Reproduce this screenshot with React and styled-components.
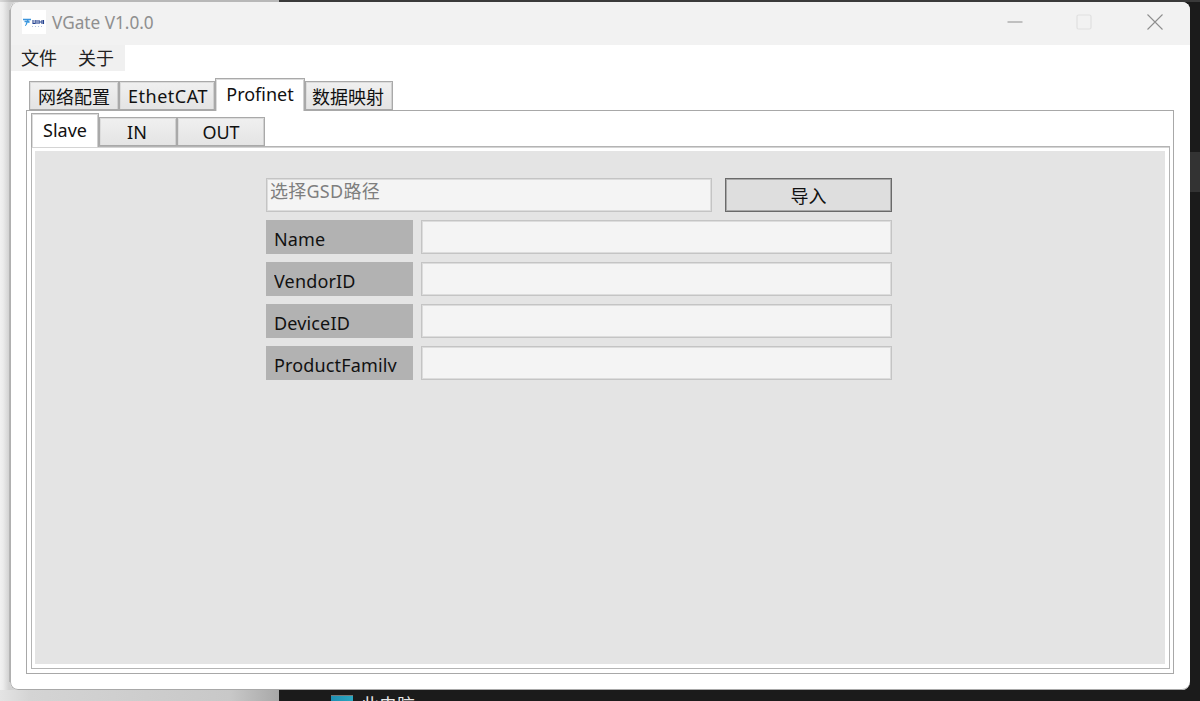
import React from "react";
import styled, { createGlobalStyle } from "styled-components";

const Global = createGlobalStyle`
  html, body { margin: 0; padding: 0; width: 1200px; height: 701px; overflow: hidden; }
  body { font-family: "Noto Sans", "Noto Sans CJK SC", sans-serif; }
  #root { width: 1200px; height: 701px; }
`;

const Desktop = styled.div`
  position: relative;
  width: 1200px;
  height: 701px;
  overflow: hidden;
  box-sizing: border-box;
  padding: 2px 10px 11px;
  background: linear-gradient(90deg, #f1f1f1 0, #ececec 3px, #d2d2d2 9px, #d2d2d2 279px, #1b1b1b 279px, #1b1b1b 100%);
`;
const TopStrip = styled.div`
  position: absolute;
  left: 0;
  right: 0;
  top: 0;
  height: 2px;
  background: linear-gradient(90deg, #d8d8d8 0, #b8b8b8 12px, #b8b8b8 279px, #3a3a3a 279px, #3a3a3a 100%);
`;
const BottomShade = styled.div`
  position: absolute;
  left: 0;
  width: 279px;
  bottom: 0;
  height: 11px;
  background: linear-gradient(90deg, #e4e4e4 0, #d4d4d4 30px, #c8c8c8 230px, #a8a8a8 279px);
`;
const SideBand = styled.div`
  position: absolute;
  right: 0;
  top: 152px;
  width: 10px;
  height: 40px;
  background: #333;
`;
const ThisPc = styled.div`
  position: absolute;
  left: 331px;
  top: 695px;
  display: flex;
  gap: 8px;
  align-items: flex-start;
  color: #e8e8e8;
  font-size: 18px;
  line-height: 18px;
  font-family: "Noto Sans CJK SC", sans-serif;
`;
const PcIcon = styled.div`
  width: 22px;
  height: 14px;
  background: linear-gradient(90deg, #1f8fb3, #2aa6bf);
  border-top: 1px solid #777;
`;
const Window = styled.div`
  position: relative;
  width: 1180px;
  height: 688px;
  box-sizing: border-box;
  background: #fff;
  border-radius: 8px;
  overflow: hidden;
  display: flex;
  flex-direction: column;
  &::after {
    content: "";
    position: absolute;
    inset: 0;
    border-radius: 8px;
    pointer-events: none;
    box-shadow: inset 1px 0 0 #b0b0b0, inset 0 -1px 0 #a8a8a8;
  }
`;
const WindowEdge = styled.div`
  position: absolute;
  left: 9px;
  top: 10px;
  width: 1px;
  height: 672px;
  background: #b4b4b4;
`;
const TitleBar = styled.div`
  height: 43px;
  flex: none;
  box-sizing: border-box;
  background: #f2f2f2;
  display: flex;
  align-items: center;
  padding: 0 0 3px 12px;
`;
const Logo = styled.svg`
  width: 24px;
  height: 24px;
  flex: none;
  display: block;
`;
const Title = styled.span`
  margin-left: 6px;
  font-size: 17.2px;
  color: #8f8f8f;
`;
const Caption = styled.div`
  margin-left: auto;
  display: flex;
  align-items: center;
`;
const CaptionBtn = styled.div`
  width: 70px;
  box-sizing: border-box;
  padding-right: ${(p) => p.$pr || 0}px;
  height: 30px;
  display: flex;
  align-items: center;
  justify-content: center;
`;
const MenuBar = styled.div`
  flex: none;
  width: 114px;
  height: 26px;
  margin-left: 1px;
  background: #f0f0f0;
  display: flex;
  align-items: center;
  padding: 0 0 2px 10px;
  gap: 21px;
  box-sizing: border-box;
`;
const MenuItem = styled.span`
  font-family: "Noto Sans CJK SC", sans-serif;
  font-size: 18px;
  line-height: 24px;
  color: #222;
`;
const Tabs = styled.div`
  display: flex;
  align-items: flex-end;
  height: ${(p) => p.$h}px;
  margin-left: ${(p) => p.$ml}px;
  flex: none;
  position: relative;
  z-index: 1;
`;
const Tab = styled.div`
  width: ${(p) => p.$w}px;
  height: ${(p) => (p.$active ? p.$ah : p.$ih)}px;
  box-sizing: border-box;
  flex: none;
  display: flex;
  align-items: center;
  justify-content: center;
  font-size: 18px;
  letter-spacing: ${(p) => p.$ls || 0}px;
  color: #111;
  border: 1px solid #a9a9a9;
  border-bottom: ${(p) => (p.$active ? "none" : "1px solid #a9a9a9")};
  box-shadow: inset 1px 1px 0 #dcdcdc, inset -1px 0 0 #d0d0d0;
  background: ${(p) => (p.$active ? "#fff" : "linear-gradient(#f0f0f0, #e4e4e4)")};
  margin-bottom: ${(p) => (p.$active ? -1 : 0)}px;
  padding-bottom: ${(p) => (p.$active ? p.$apb : 0)}px;
  padding-left: ${(p) => p.$pl || 0}px;
  padding-right: ${(p) => p.$pr || 0}px;
`;
const OuterPane = styled.div`
  flex: none;
  margin-left: 16px;
  width: 1148px;
  height: 564px;
  box-sizing: border-box;
  border: 1px solid #a8a8a8;
  background: #fff;
  padding: 4px 3px 4px 4px;
  display: flex;
  flex-direction: column;
`;
const InnerPane = styled.div`
  flex: none;
  width: 1139px;
  height: 523px;
  box-sizing: border-box;
  border: 1px solid #b4b4b4;
  box-shadow: inset 0 1px 0 #d4d4d4;
  background: #fff;
  padding: 4px 3px;
`;
const Canvas = styled.div`
  width: 1130px;
  height: 513px;
  background: #e4e4e4;
  box-sizing: border-box;
  padding: 27px 0 0 231px;
`;
const Form = styled.div`
  width: 626px;
  display: flex;
  flex-direction: column;
  gap: 8px;
`;
const Row = styled.div`
  display: flex;
  height: 34px;
  gap: ${(p) => p.$gap}px;
`;
const PathField = styled.div`
  width: 446px;
  height: 34px;
  box-sizing: border-box;
  border: 1px solid #c4c4c4;
  box-shadow: inset 0 0 0 1px #dcdcdc;
  background: #f4f4f4;
  color: #7e7e7e;
  font-size: 18px;
  letter-spacing: 0.25px;
  line-height: 22px;
  padding: 1px 0 0 3px;
`;
const ImportBtn = styled.div`
  width: 167px;
  height: 34px;
  box-sizing: border-box;
  border: 1px solid #6a6a6a;
  box-shadow: inset 0 0 0 1px #a8a8a8;
  background: #dedede;
  display: flex;
  align-items: center;
  justify-content: center;
  font-size: 18px;
  color: #111;
  font-family: "Noto Sans CJK SC", sans-serif;
`;
const Label = styled.div`
  width: 147px;
  height: 34px;
  flex: none;
  box-sizing: border-box;
  background: #b2b2b2;
  padding: 7px 0 0 8px;
`;
const LabelText = styled.div`
  height: 19px;
  overflow: hidden;
  font-size: 18px;
  letter-spacing: 0.15px;
  line-height: 25px;
  color: #111;
`;
const Value = styled.div`
  width: 471px;
  height: 34px;
  box-sizing: border-box;
  border: 1px solid #c4c4c4;
  box-shadow: inset 0 0 0 1px #dcdcdc;
  background: #f4f4f4;
`;

const outer = [
  { t: "网络配置", w: 90 },
  { t: "EthetCAT", w: 96, ls: 0.5, pl: 2 },
  { t: "Profinet", w: 90, a: true },
  { t: "数据映射", w: 88, pr: 2 },
];
const inner = [
  { t: "Slave", w: 68, a: true },
  { t: "IN", w: 78, pr: 2 },
  { t: "OUT", w: 88 },
];
const fields = ["Name", "VendorID", "DeviceID", "ProductFamily"];

export default function App() {
  return (
    <Desktop>
      <Global />
      <TopStrip />
      <BottomShade />
      <SideBand />
      <WindowEdge />
      <ThisPc>
        <PcIcon />
        <span>此电脑</span>
      </ThisPc>
      <Window>
        <TitleBar>
          <Logo viewBox="0 0 24 24">
            <rect width="24" height="24" fill="#fff" />
            <path d="M1 9.5h8M2.5 11.5h5M4 15l2-5.5" stroke="#3b94dc" strokeWidth="1.3" fill="none" />
            <path d="M4.5 12.5h3M3 16l2-2" stroke="#5aaee8" strokeWidth="1" fill="none" />
            <path d="M11 10v3.5h2.2V10M15 10v4M17 10v4M20 10v4M17 12h3M21.5 10v4" stroke="#23418f" strokeWidth="1.1" fill="none" />
            <path d="M10 16.5h1M13 16.5h1M16 16.5h1M19 16.5h1" stroke="#9db3d8" strokeWidth="0.8" />
          </Logo>
          <Title>VGate V1.0.0</Title>
          <Caption>
            <CaptionBtn>
              <svg width="16" height="16" viewBox="0 0 16 16">
                <path d="M0.5 8h15" stroke="#8e8e8e" strokeWidth="1" />
              </svg>
            </CaptionBtn>
            <CaptionBtn $pr={3}>
              <svg width="16" height="16" viewBox="0 0 16 16">
                <rect x="1" y="1" width="14" height="14" rx="1.5" fill="none" stroke="#e0e0e0" strokeWidth="1.2" />
              </svg>
            </CaptionBtn>
            <CaptionBtn>
              <svg width="16" height="16" viewBox="0 0 16 16">
                <path d="M0.5 0.5l15 15M15.5 0.5l-15 15" stroke="#8e8e8e" strokeWidth="1.1" />
              </svg>
            </CaptionBtn>
          </Caption>
        </TitleBar>
        <MenuBar>
          <MenuItem>文件</MenuItem>
          <MenuItem>关于</MenuItem>
        </MenuBar>
        <Tabs $h={39} $ml={19}>
          {outer.map(({ t, w, a, ls, pl, pr }) => (
            <Tab key={t} $w={w} $active={a} $ih={29} $ah={33} $apb={2} $ls={ls} $pl={pl} $pr={pr}>
              {t}
            </Tab>
          ))}
        </Tabs>
        <OuterPane>
          <Tabs $h={31} $ml={0}>
            {inner.map(({ t, w, a, ls, pl, pr }) => (
              <Tab key={t} $w={w} $active={a} $ih={29} $ah={34} $apb={1} $ls={ls} $pl={pl} $pr={pr}>
                {t}
              </Tab>
            ))}
          </Tabs>
          <InnerPane>
            <Canvas>
              <Form>
                <Row $gap={13}>
                  <PathField>选择GSD路径</PathField>
                  <ImportBtn>导入</ImportBtn>
                </Row>
                {fields.map((f) => (
                  <Row key={f} $gap={8}>
                    <Label>
                      <LabelText>{f}</LabelText>
                    </Label>
                    <Value />
                  </Row>
                ))}
              </Form>
            </Canvas>
          </InnerPane>
        </OuterPane>
      </Window>
    </Desktop>
  );
}
